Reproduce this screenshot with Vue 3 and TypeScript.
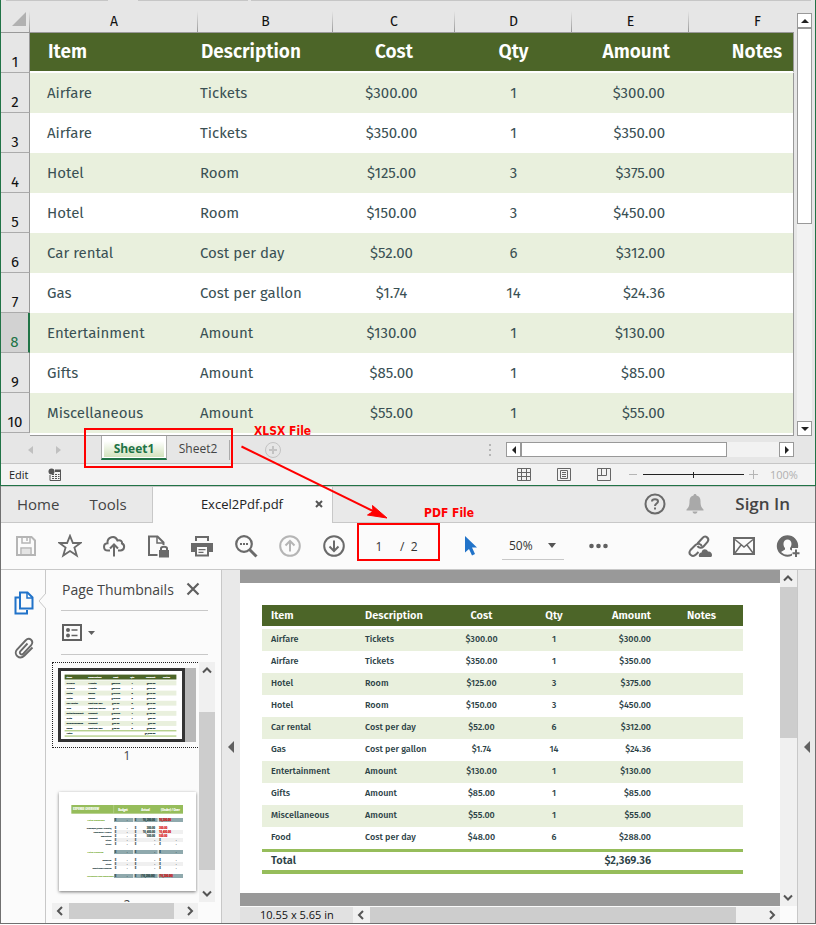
<script setup lang="ts">
import { ref } from 'vue'

interface Expense {
  item: string
  description: string
  cost: string
  qty: string
  amount: string
}

const headings = ['Item', 'Description', 'Cost', 'Qty', 'Amount', 'Notes']
const letters = ['A', 'B', 'C', 'D', 'E', 'F']

const expenses: Expense[] = [
  { item: 'Airfare', description: 'Tickets', cost: '$300.00', qty: '1', amount: '$300.00' },
  { item: 'Airfare', description: 'Tickets', cost: '$350.00', qty: '1', amount: '$350.00' },
  { item: 'Hotel', description: 'Room', cost: '$125.00', qty: '3', amount: '$375.00' },
  { item: 'Hotel', description: 'Room', cost: '$150.00', qty: '3', amount: '$450.00' },
  { item: 'Car rental', description: 'Cost per day', cost: '$52.00', qty: '6', amount: '$312.00' },
  { item: 'Gas', description: 'Cost per gallon', cost: '$1.74', qty: '14', amount: '$24.36' },
  { item: 'Entertainment', description: 'Amount', cost: '$130.00', qty: '1', amount: '$130.00' },
  { item: 'Gifts', description: 'Amount', cost: '$85.00', qty: '1', amount: '$85.00' },
  { item: 'Miscellaneous', description: 'Amount', cost: '$55.00', qty: '1', amount: '$55.00' },
  { item: 'Food', description: 'Cost per day', cost: '$48.00', qty: '6', amount: '$288.00' },
]
const sheetRows = expenses.slice(0, 9)
const total = '$2,369.36'
const activeRow = 8

interface OverviewRow {
  y: number
  label: string
  kind: 'total' | 'plain' | 'striped'
  actual: string
  over: string
  red?: boolean
}
const overview: OverviewRow[] = [
  { y: 240, label: 'Total Expenses', kind: 'total', actual: '10,200.00', over: '10,200.00', red: true },
  { y: 264, label: 'Available (Dues / Events)', kind: 'plain', actual: '300.00', over: '300.00', red: true },
  { y: 276, label: 'Insurance / Office', kind: 'striped', actual: '10,400.00', over: '10,400.00', red: true },
  { y: 288, label: 'Marketing', kind: 'plain', actual: '500.00', over: '500.00', red: true },
  { y: 300, label: 'Other', kind: 'striped', actual: '-', over: '-' },
  { y: 312, label: 'Other', kind: 'plain', actual: '-', over: '-' },
  { y: 336, label: 'Total Funding', kind: 'total', actual: '-', over: '-' },
  { y: 360, label: 'Reserves', kind: 'plain', actual: '-', over: '-' },
  { y: 372, label: 'Other', kind: 'striped', actual: '-', over: '-' },
  { y: 384, label: 'Additional Funding', kind: 'plain', actual: '-', over: '-' },
  { y: 408, label: 'Funding Less Expenses', kind: 'total', actual: '(10,200.00)', over: '(10,200.00)', red: true },
]

const sheetZoom = ref(50)
const pageNumber = ref('1')
const pdfZoom = ref('50%')
</script>

<template>
  <div class="screen">
    <section class="excel" aria-label="Spreadsheet">
      <div class="formula-edge"><i class="e1"></i><i class="e2"></i><i class="e3"></i></div>
      <div class="sheet-area">
        <div class="sheet-wrap">
          <table class="sheet">
            <colgroup>
              <col class="ch" /><col class="ca" /><col class="cb" /><col class="cc" /><col class="cd" /><col class="ce" /><col />
            </colgroup>
            <thead>
              <tr class="letters">
                <th class="corner"><svg width="15" height="15" viewBox="0 0 15 15"><path d="M14 0V14H0Z" fill="#b1b1b1" /></svg></th>
                <th v-for="l in letters" :key="l" :class="'col-' + l">{{ l }}</th>
              </tr>
            </thead>
            <tbody>
              <tr class="titles">
                <th class="rownum" scope="row">1</th>
                <td v-for="(h, i) in headings" :key="h" :class="'col-' + letters[i]"><span>{{ h }}</span></td>
              </tr>
              <tr v-for="(r, i) in sheetRows" :key="i" :class="{ band: i % 2 === 0 }">
                <th class="rownum" :class="{ active: i + 2 === activeRow }" scope="row">{{ i + 2 }}</th>
                <td class="col-A">{{ r.item }}</td>
                <td class="col-B">{{ r.description }}</td>
                <td class="col-C">{{ r.cost }}</td>
                <td class="col-D">{{ r.qty }}</td>
                <td class="col-E">{{ r.amount }}</td>
                <td class="col-F"></td>
              </tr>
            </tbody>
          </table>
          <div class="sheet-end"></div>
        </div>
        <div class="vbar">
          <button class="xbtn" aria-label="Scroll up"><svg width="8" height="8" viewBox="0 0 8 8"><path d="M0 6L4 2L8 6Z" fill="#222" /></svg></button>
          <div class="vthumb"></div>
          <button class="xbtn end" aria-label="Scroll down"><svg width="8" height="8" viewBox="0 0 8 8"><path d="M0 2L4 6L8 2Z" fill="#222" /></svg></button>
        </div>
      </div>

      <div class="sheet-tabs">
        <button class="nav-arrow" aria-label="Previous sheet"><svg width="5" height="8" viewBox="0 0 5 8"><path d="M5 0V8L0 4Z" fill="#c0c0c0" /></svg></button>
        <button class="nav-arrow" aria-label="Next sheet"><svg width="5" height="8" viewBox="0 0 5 8"><path d="M0 0V8L5 4Z" fill="#c0c0c0" /></svg></button>
        <button class="stab on"><span>Sheet1</span></button>
        <button class="stab">Sheet2</button>
        <i class="tab-sep"></i>
        <button class="add" aria-label="New sheet">
          <svg width="18" height="18" viewBox="0 0 18 18" fill="none" stroke="#c3c3c3"><circle cx="9" cy="9" r="7.500" /><path d="M9 5V13M5 9H13" stroke-width="2" /></svg>
        </button>
        <span class="grip"><i></i><i></i><i></i></span>
        <div class="hbar">
          <button class="xbtn" aria-label="Scroll left"><svg width="8" height="8" viewBox="0 0 8 8"><path d="M6 0L2 4L6 8Z" fill="#222" /></svg></button>
          <div class="hthumb"></div>
          <button class="xbtn end" aria-label="Scroll right"><svg width="8" height="8" viewBox="0 0 8 8"><path d="M2 0L6 4L2 8Z" fill="#222" /></svg></button>
        </div>
      </div>

      <div class="status">
        <span class="mode">Edit</span>
        <svg class="macro" width="14" height="14" viewBox="0 0 14 14"><path d="M2 7V12.500H12.500V3H7" fill="none" stroke="#555" /><path d="M7 1.500H13V4H7Z" fill="#555" /><circle cx="3.500" cy="3.500" r="3" fill="#555" /><path d="M4 6.500H6M7 6.500H9M10 6.500H11.500M4 8.500H6M7 8.500H9M10 8.500H11.500M4 10.500H6M7 10.500H9M10 10.500H11.500" stroke="#555" /></svg>
        <span class="views">
          <button aria-label="Normal view"><svg width="14" height="14" viewBox="0 0 14 14" fill="none" stroke="#666"><path d="M.5 .5H13.500V12.500H.5ZM.5 4.500H13.500M.5 8.500H13.500M4.500 .5V12.500M9.500 .5V12.500" /></svg></button>
          <button aria-label="Page layout"><svg width="14" height="14" viewBox="0 0 14 14" fill="none" stroke="#666"><path d="M.5 .5H13.500V12.500H.5ZM3.500 2.500H10.500V10.500H3.500ZM5 4.500H9M5 6.500H9M5 8.500H9" /></svg></button>
          <button aria-label="Page break preview"><svg width="14" height="14" viewBox="0 0 14 14" fill="none" stroke="#666"><path d="M.5 .5H13.500V12.500H.5ZM4.500 .5V7.500M9.500 .5V7.500H.5" /></svg></button>
        </span>
        <button class="zm" aria-label="Zoom out"><svg width="9" height="9" viewBox="0 0 9 9" stroke="#b5b5b5"><path d="M0 4.500H8" /></svg></button>
        <input v-model="sheetZoom" class="slider" type="range" min="0" max="100" aria-label="Zoom" />
        <button class="zm" aria-label="Zoom in"><svg width="9" height="9" viewBox="0 0 9 9" stroke="#b5b5b5"><path d="M0 4.500H9M4.500 0V9" /></svg></button>
        <span class="pct">100%</span>
      </div>
    </section>

    <section class="pdf" aria-label="PDF viewer">
      <div class="ptabs">
        <nav class="menu"><a href="#home">Home</a><a href="#tools">Tools</a></nav>
        <div class="ptab">
          <span>Excel2Pdf.pdf</span>
          <button aria-label="Close tab"><svg width="8" height="8" viewBox="0 0 8 8" stroke="#555" stroke-width="2"><path d="M1 1L7 7M7 1L1 7" /></svg></button>
        </div>
        <div class="account">
          <button aria-label="Help"><svg width="22" height="22" viewBox="0 0 22 22" fill="none" stroke="#6a6a6a" stroke-width="2"><circle cx="11" cy="11" r="9.500" /><path d="M8 8.500C8 5.500 14 5.500 14 8.500C14 10.500 11 10.500 11 13" /><path d="M11 14.500V16.500" /></svg></button>
          <button aria-label="Notifications"><svg width="18" height="20" viewBox="0 0 18 20" fill="#a9a9a9"><path d="M9 0C10 0 10.500 .6 10.500 1.500C13.500 2.300 14.500 4.500 14.500 7C14.500 12 15.500 13.500 17.500 15.500V16.500H.5V15.500C2.500 13.500 3.500 12 3.500 7C3.500 4.500 4.500 2.300 7.500 1.500C7.500 .6 8 0 9 0ZM6.500 17.500H11.500C11 20.500 7 20.500 6.500 17.500Z" /></svg></button>
          <a href="#signin">Sign In</a>
        </div>
      </div>

      <div class="toolbar">
        <div class="tools">
          <button aria-label="Save"><svg viewBox="0 0 24 24" fill="none" stroke="#b5b5b5" stroke-width="2"><path d="M3 3H17.500L21 6.500V21H3Z" /><path d="M8 3V9H16V3M13 4V7M7 21V14H17V21" stroke-width="1.500" /><path d="M8 15H16V20H8Z" fill="#e4e4e4" stroke="none" /></svg></button>
          <button aria-label="Star"><svg viewBox="0 0 24 24" fill="none" stroke="#6a6a6a" stroke-width="1.800"><path d="M12 1.800L14.900 9H22.500L16.400 13.600L18.800 21.500L12 17L5.200 21.500L7.600 13.600L1.500 9H9.100Z" /></svg></button>
          <button aria-label="Upload"><svg viewBox="0 0 24 24" fill="none" stroke="#6a6a6a" stroke-width="2"><path d="M8 16.500H6C.8 16.500 .8 9.500 5.500 9.200C5 3 13 .5 15.500 6.500C19 5.500 20.500 8 20 9.500C23.500 11 22.500 16.500 18.500 16.500H16M12 22.500V11M8 14.500L12 10.500L16 14.500" /></svg></button>
          <button aria-label="Protect"><svg viewBox="0 0 24 24" fill="none" stroke="#6a6a6a" stroke-width="2"><path d="M11.500 21H3V2.500H11.500L17.500 8.500V11" /><path d="M11 2.500V9H17.500" stroke-width="1.500" /><path d="M13 16H23V23.500H13Z" fill="#6a6a6a" stroke="none" /><path d="M15 16.500V14.500C15 12 21 12 21 14.500V16.500" /></svg></button>
          <button aria-label="Print"><svg viewBox="0 0 24 24" fill="#6a6a6a"><path d="M5 2H19V7H17V4H7V7H5Z" /><path d="M1 9H23V18H19V13H5V18H1Z" /><path d="M5 13H19V22.500H5ZM7 13V20.500H17V13ZM8.500 15H15.500V16.300H8.500ZM8.500 17.700H13.500V19H8.500Z" fill-rule="evenodd" /></svg></button>
          <button aria-label="Find"><svg viewBox="0 0 24 24" fill="none" stroke="#6a6a6a"><circle cx="10" cy="10" r="7.800" stroke-width="2.200" /><path d="M15.500 15.500L22.500 22.500" stroke-width="3" /><path d="M6 10H8M9 10H11M12 10H14" stroke-width="2" /></svg></button>
          <button aria-label="Previous page"><svg viewBox="0 0 24 24" fill="none" stroke="#b5b5b5" stroke-width="2"><circle cx="12" cy="12" r="9.800" /><path d="M12 17.500V7M7.500 11.500L12 7L16.500 11.500" /></svg></button>
          <button aria-label="Next page"><svg viewBox="0 0 24 24" fill="none" stroke="#6a6a6a" stroke-width="2"><circle cx="12" cy="12" r="9.800" /><path d="M12 6.500V17M7.500 12.500L12 17L16.500 12.500" /></svg></button>
        </div>
        <label class="pager"><input v-model="pageNumber" type="text" aria-label="Page number" /><span>/&nbsp; 2</span></label>
        <button class="pointer" aria-label="Select"><svg width="14" height="20" viewBox="0 0 14 20"><path d="M1 0L13 11.500H8L11 18L8 19.500L5 13L1 16.500Z" fill="#2173c9" /></svg></button>
        <div class="zoom">
          <select v-model="pdfZoom" aria-label="Zoom level"><option>50%</option><option>100%</option></select>
          <svg width="8" height="5" viewBox="0 0 8 5"><path d="M0 0H8L4 5Z" fill="#555" /></svg>
        </div>
        <button class="more" aria-label="More"><svg width="19" height="6" viewBox="0 0 19 6" fill="#606060"><circle cx="2.500" cy="3" r="2.300" /><circle cx="9.500" cy="3" r="2.300" /><circle cx="16.500" cy="3" r="2.300" /></svg></button>
        <div class="share">
          <button aria-label="Share link"><svg viewBox="0 0 24 24" fill="none" stroke="#6a6a6a" stroke-width="2"><path d="M9.500 9.500L14.500 4C17.500 .5 22 4.500 19.500 8L15.500 12.500C13.500 14.500 10.500 14 9.500 12" /><path d="M14 12.500C13 9.500 9.500 9 7.500 11L2.500 16C-.5 20 4.500 24 8 20.500L10.500 18" /><path d="M11.500 23C10 22 11 18.500 13.500 18.500C14 14.500 18.500 14 20 17.500C24 17 25 22 23 23Z" fill="#6a6a6a" stroke="none" /></svg></button>
          <button aria-label="Mail"><svg viewBox="0 0 24 24" fill="none" stroke="#6a6a6a"><path d="M2 4H22V20H2Z" stroke-width="2" /><path d="M3 5.500L12 13L21 5.500M3 19L9 11M21 19L15 11" stroke-width="1.500" /></svg></button>
          <button aria-label="Add person"><svg viewBox="0 0 24 24"><circle cx="11.500" cy="12" r="9.700" fill="none" stroke="#6a6a6a" stroke-width="2" /><path d="M11.500 2C18 2 21.500 7 21.500 12C21.500 16 19.500 19 17.500 20V17.500L14 15.500V14C16.500 11.500 16 5.500 11.500 5.500C7 5.500 6.500 11.500 9 14V15.500L5 18V19.500C2.500 17.500 1.500 15 1.500 12C1.500 7 5 2 11.500 2Z" fill="#6a6a6a" /><path d="M16 14H24V24H16Z" fill="#fbfbfb" /><path d="M20 15.500V23M16.500 19.200H23.500" stroke="#6a6a6a" stroke-width="2" /></svg></button>
        </div>
      </div>

      <div class="work">
        <div class="rail">
          <button aria-label="Page thumbnails"><svg width="20" height="24" viewBox="0 0 20 24" fill="none" stroke="#2173c9" stroke-width="2"><path d="M5 6.500H1.500V22.500H13V19" /><path d="M6 1.500H13.500L18.500 6.500V17.500H6Z" /><path d="M13 1.500V7H18.500" stroke-width="1.500" /></svg></button>
          <button aria-label="Attachments"><svg width="20" height="22" viewBox="0 0 20 22" fill="none" stroke="#6a6a6a" stroke-width="1.900"><path d="M13.500 6.500L6.500 14C4.500 16.500 7.500 18.500 9.500 16.500L17 8.500C20.500 4 15.500 -.5 11.500 3.500L3 12.500C-1 17.500 5.500 23.500 10.500 18.500L18.500 10.500" /></svg></button>
          <svg class="notch" width="8" height="16" viewBox="0 0 8 16"><path d="M8 0L1 8L8 16" fill="#fbfbfb" stroke="#c8c8c8" /></svg>
        </div>

        <aside class="panel">
          <header>
            <h2>Page Thumbnails</h2>
            <button aria-label="Close panel"><svg width="14" height="14" viewBox="0 0 14 14" stroke="#606060" stroke-width="2.200"><path d="M1.500 1.500L12.500 12.500M12.500 1.500L1.500 12.500" /></svg></button>
          </header>
          <div class="opts">
            <button aria-label="Options"><svg width="34" height="18" viewBox="0 0 34 18"><path d="M1 1H19V16H1Z" fill="none" stroke="#606060" stroke-width="2" /><circle cx="6" cy="6" r="2" fill="#606060" /><circle cx="6" cy="11.500" r="2" fill="#606060" /><path d="M9.500 6H15.500M9.500 11.500H15.500" stroke="#606060" stroke-width="1.500" /><path d="M26 7H33L29.500 11Z" fill="#606060" /></svg></button>
          </div>
          <div class="list">
            <div class="thumbs">
              <div class="pick">
                <div class="mini">
                  <svg viewBox="181 331 367 208" preserveAspectRatio="none" font-size="7" font-weight="700" stroke-width=".6">
                    <rect x="181" y="331" width="367" height="208" fill="#fff" />
                    <rect x="192" y="342" width="339" height="15" fill="#4c6528" />
                    <g fill="#fff" stroke="#fff">
                      <text x="198" y="352">Item</text><text x="264" y="352">Description</text>
                      <text x="347" y="352" text-anchor="middle">Cost</text><text x="397" y="352" text-anchor="middle">Qty</text>
                      <text x="467" y="352" text-anchor="end">Amount</text><text x="501" y="352" text-anchor="middle">Notes</text>
                    </g>
                    <g v-for="(r, i) in expenses" :key="i" fill="#223c3c" stroke="#223c3c">
                      <rect v-if="i % 2 === 0" x="192" :y="360 + i * 15.5" width="339" height="15" fill="#e9f0dd" stroke="none" />
                      <text x="198" :y="370 + i * 15.5">{{ r.item }}</text>
                      <text x="264" :y="370 + i * 15.5">{{ r.description }}</text>
                      <text x="347" :y="370 + i * 15.5" text-anchor="middle">{{ r.cost }}</text>
                      <text x="397" :y="370 + i * 15.5" text-anchor="middle">{{ r.qty }}</text>
                      <text x="467" :y="370 + i * 15.5" text-anchor="end">{{ r.amount }}</text>
                    </g>
                    <path d="M192 514H531M192 530H531" stroke="#96bd5b" stroke-width="3" />
                    <g fill="#223c3c" stroke="#223c3c"><text x="198" y="525">Total</text><text x="467" y="525" text-anchor="end">{{ total }}</text></g>
                  </svg>
                </div>
                <div class="mini-shade"></div>
              </div>
              <div class="num">1</div>
              <div class="second">
                <svg viewBox="176 156 411 297" preserveAspectRatio="none" font-size="8" font-weight="700" stroke-width=".4">
                  <rect x="213" y="195" width="335" height="26" fill="#96bd5b" />
                  <path d="M340 195V221" stroke="#c6dca6" stroke-width="1.500" />
                  <g fill="#fff" stroke="#fff"><text x="218" y="210">EXPENSE OVERVIEW</text><text x="354" y="213">Budget</text><text x="423" y="213">Actual</text><text x="482" y="213">(Under) / Over</text></g>
                  <g v-for="r in overview" :key="r.y" fill="#223c3c" stroke="#223c3c">
                    <g v-if="r.kind === 'total'" fill="#8fa9ad" stroke="none">
                      <rect x="341" :y="r.y - 6" width="58" height="12" /><rect x="402" :y="r.y - 6" width="70" height="12" /><rect x="475" :y="r.y - 6" width="73" height="12" />
                    </g>
                    <rect v-if="r.kind === 'striped'" x="341" :y="r.y - 6" width="207" height="12" fill="#f0f0f0" stroke="none" />
                    <text v-if="r.kind === 'total'" x="261" :y="r.y + 3" fill="#7fb142" stroke="#7fb142" font-size="7">{{ r.label }}</text>
                    <text v-else x="333" :y="r.y + 3" text-anchor="end" font-size="6">{{ r.label }}</text>
                    <text x="343" :y="r.y + 3">$</text><text x="379" :y="r.y + 3">-</text>
                    <text x="403" :y="r.y + 3">$</text><text x="464" :y="r.y + 3" text-anchor="end">{{ r.actual }}</text>
                    <text v-if="r.red" x="476" :y="r.y + 3" fill="#d40000" stroke="#d40000">{{ r.over }}</text>
                    <template v-else><text x="477" :y="r.y + 3">$</text><text x="526" :y="r.y + 3">{{ r.over }}</text></template>
                  </g>
                </svg>
              </div>
              <div class="num low">2</div>
            </div>
            <div class="pbar v">
              <button aria-label="Scroll thumbnails up"><svg width="10" height="10" viewBox="0 0 10 10"><path d="M1 7.500L5 3.500L9 7.500" /></svg></button>
              <div class="pthumb tv"></div>
              <button class="end" aria-label="Scroll thumbnails down"><svg width="10" height="10" viewBox="0 0 10 10"><path d="M1 2.500L5 6.500L9 2.500" /></svg></button>
            </div>
          </div>
          <div class="pbar h tb">
            <button aria-label="Scroll thumbnails left"><svg width="10" height="10" viewBox="0 0 10 10"><path d="M7 1L3 5L7 9" /></svg></button>
            <div class="pthumb th"></div>
            <button class="end" aria-label="Scroll thumbnails right"><svg width="10" height="10" viewBox="0 0 10 10"><path d="M3 1L7 5L3 9" /></svg></button>
          </div>
        </aside>

        <button class="strip" aria-label="Hide navigation pane"><svg width="6" height="12" viewBox="0 0 6 12"><path d="M6 0V12L0 6Z" fill="#606060" /></svg></button>

        <div class="doc">
          <div class="view">
            <div class="page">
              <table class="report">
                <colgroup><col class="pa" /><col class="pb" /><col class="pc" /><col class="pd" /><col class="pe" /><col /></colgroup>
                <thead>
                  <tr><th v-for="(h, i) in headings" :key="h" :class="'p' + letters[i]">{{ h }}</th></tr>
                </thead>
                <tbody>
                  <tr class="space"><td colspan="6"></td></tr>
                  <tr v-for="(r, i) in expenses" :key="i" :class="{ band: i % 2 === 0 }">
                    <td class="pA">{{ r.item }}</td>
                    <td class="pB">{{ r.description }}</td>
                    <td class="pC">{{ r.cost }}</td>
                    <td class="pD">{{ r.qty }}</td>
                    <td class="pE">{{ r.amount }}</td>
                    <td class="pF"></td>
                  </tr>
                </tbody>
                <tfoot>
                  <tr><td class="pA">Total</td><td></td><td></td><td></td><td class="pE">{{ total }}</td><td></td></tr>
                </tfoot>
              </table>
            </div>
            <div class="pbar v">
              <button aria-label="Scroll document up"><svg width="10" height="10" viewBox="0 0 10 10"><path d="M1 7.500L5 3.500L9 7.500" /></svg></button>
              <div class="pthumb dv"></div>
              <button class="end" aria-label="Scroll document down"><svg width="10" height="10" viewBox="0 0 10 10"><path d="M1 2.500L5 6.500L9 2.500" /></svg></button>
            </div>
          </div>
          <div class="foot">
            <span class="size">10.55 x 5.65 in</span>
            <div class="pbar h">
              <button aria-label="Scroll document left"><svg width="10" height="10" viewBox="0 0 10 10"><path d="M7 1L3 5L7 9" /></svg></button>
              <div class="pthumb dh"></div>
              <button class="end" aria-label="Scroll document right"><svg width="10" height="10" viewBox="0 0 10 10"><path d="M3 1L7 5L3 9" /></svg></button>
            </div>
          </div>
        </div>

        <button class="strip right" aria-label="Show tools pane"><svg width="6" height="12" viewBox="0 0 6 12"><path d="M6 0V12L0 6Z" fill="#606060" /></svg></button>
      </div>
    </section>

    <svg class="notes" width="816" height="925" viewBox="0 0 816 925">
      <g fill="none" stroke="#f00" stroke-width="2"><rect x="85" y="429" width="147" height="38" /><rect x="358" y="524" width="81" height="36" /><path d="M241.500 446.500L374 511.500" /></g>
      <path d="M387 518L372.500 505.500L373 511.500L367.500 515Z" fill="#f00" stroke="#f00" />
      <g fill="#f00" font-weight="700" font-size="12"><text x="254" y="435">XLSX File</text><text x="424" y="517">PDF File</text></g>
    </svg>
  </div>
</template>

<style>
body {
  background: #fff;
}
</style>

<style scoped>
* {
  box-sizing: border-box;
}
.screen {
  position: relative;
  font-family: "Open Sans", "Noto Sans", sans-serif;
  color: #444;
}
button {
  display: flex;
  align-items: center;
  justify-content: center;
  padding: 0;
  border: 0;
  background: none;
  color: inherit;
  font: inherit;
}
a {
  color: inherit;
  text-decoration: none;
}
svg {
  display: block;
  flex: none;
}
table {
  border-spacing: 0;
  table-layout: fixed;
}
td,
th {
  padding: 0;
}

/* spreadsheet */
.excel {
  border: solid #217346;
  border-width: 0 1px 1px;
  background: #e6e6e6;
}
.formula-edge {
  display: flex;
  height: 1px;
  padding: 0 4px 0 5px;
}
.formula-edge i {
  background: #c6c6c6;
}
.e1 {
  width: 102px;
  margin-right: 30px;
}
.e2 {
  width: 110px;
  margin-right: 3px;
}
.e3 {
  flex: 1;
}
.sheet-area {
  display: flex;
}
.sheet-wrap {
  flex: 1;
  min-width: 0;
}
.sheet {
  width: 100%;
  font-family: "Trebuchet MS", "Fira Sans", "Open Sans", sans-serif;
  font-size: 15px;
  color: #3a5054;
  white-space: nowrap;
}
.ch {
  width: 29px;
}
.ca {
  width: 168px;
}
.cb {
  width: 135px;
}
.cc {
  width: 122px;
}
.cd,
.ce {
  width: 117px;
}
.letters th {
  height: 32px;
  padding-top: 10px;
  border-bottom: 1px solid #999;
  background: linear-gradient(#e6e6e6, #999) right 10px / 1px 21px no-repeat;
  color: #111;
  font-weight: 400;
  font-size: 14px;
  line-height: 21px;
  text-align: center;
}
.letters .corner {
  padding: 6px 0 0 11px;
}
.letters .col-F {
  padding-left: 32px;
  background: none;
}
.rownum {
  height: 40px;
  border-right: 1px solid #999;
  border-bottom: 1px solid #ababab;
  background: #e6e6e6;
  color: #111;
  font-weight: 400;
  line-height: 20px;
  vertical-align: bottom;
}
.rownum.active {
  border-right: 2px solid #217346;
  background: #d2d2d2;
  color: #217346;
}
td.col-A {
  padding-left: 17px;
}
td.col-B {
  padding-left: 2px;
}
td.col-C {
  padding-right: 5px;
  text-align: center;
}
td.col-D {
  text-align: center;
}
td.col-E {
  padding-right: 24px;
  text-align: right;
}
td.col-F {
  padding-left: 32px;
  border-right: 1px solid #999;
  background-clip: padding-box;
  text-align: center;
}
.titles td {
  border-bottom: 2px solid #fff;
  background: #4c6528;
  color: #fff;
  font-size: 19px;
  font-weight: 600;
  line-height: 24px;
}
.titles .col-A {
  padding-left: 18px;
}
.titles .col-B {
  padding-left: 3px;
}
.titles .col-C {
  padding-right: 0;
}
.titles .col-E {
  padding-right: 19px;
}
.sheet tbody tr {
  background: #fff;
}
.sheet tbody .band {
  background: #e9f0dd;
}
.sheet-end {
  height: 3px;
  margin-left: 29px;
  border: solid #999;
  border-width: 0 1px 1px 0;
  background: #fff;
}
.vbar {
  display: flex;
  flex-direction: column;
  width: 15px;
  margin: 12px 3px 0;
  background: #f2f2f2;
}
.xbtn {
  width: 15px;
  height: 15px;
  border: 1px solid #999;
  background: #fff;
}
.vthumb {
  height: 196px;
  border: 1px solid #999;
  background: #fff;
}
.vbar .end {
  margin-top: auto;
}
.sheet-tabs {
  display: flex;
  align-items: center;
  height: 28px;
  padding: 0 21px 0 27px;
  border-bottom: 1px solid #c6c6c6;
  font-size: 12px;
}
.nav-arrow {
  width: 5px;
  margin-right: 23px;
}
.nav-arrow + .nav-arrow {
  margin-right: 40px;
}
.stab {
  align-self: flex-start;
  width: 62px;
  height: 24px;
  color: #444;
}
.stab.on {
  width: 66px;
  padding: 5px 2px 1px;
  border: 1px solid #ababab;
  border-width: 0 1px 2px;
  border-bottom-color: #217346;
  background: #fff;
  color: #217346;
  font-weight: 700;
}
.stab.on span {
  flex: 1;
  background: linear-gradient(#fff, #d3e3bd);
  line-height: 16px;
}
.tab-sep {
  width: 1px;
  height: 20px;
  background: #ababab;
}
.add {
  margin-left: 34px;
}
.grip {
  display: grid;
  gap: 3px;
  margin-left: auto;
}
.grip i {
  width: 2px;
  height: 2px;
  background: #b5b5b5;
}
.hbar {
  display: flex;
  width: 288px;
  margin-left: 15px;
  background: #f2f2f2;
}
.hthumb {
  width: 206px;
  border: 1px solid #999;
  background: #fff;
}
.hbar .end {
  margin-left: auto;
}
.status {
  display: flex;
  align-items: center;
  height: 21px;
  padding: 0 17px 0 8px;
  background: #f3f3f3;
  font-size: 11px;
}
.mode {
  width: 39px;
  color: #222;
}
.views {
  display: flex;
  gap: 26px;
  margin: 0 18px 0 auto;
}
.slider {
  width: 101px;
  height: 10px;
  margin: 0 5px;
  appearance: none;
  background: linear-gradient(#222, #222) center / 100% 1px no-repeat;
}
.slider::-webkit-slider-thumb {
  width: 1px;
  height: 6px;
  appearance: none;
  background: #222;
}
.pct {
  width: 28px;
  margin-left: 12px;
  color: #b0b0b0;
}

/* pdf viewer */
.pdf {
  border: solid #707070;
  border-width: 0 1px 1px;
  background: #fbfbfb;
}
.ptabs {
  display: flex;
  height: 37px;
  border: solid #c8c8c8;
  border-width: 1px 0;
  background: #e9e9e9;
}
.menu {
  display: flex;
  align-items: center;
  gap: 30px;
  width: 151px;
  padding: 0 0 2px 16px;
  font-size: 15px;
}
.ptab {
  display: flex;
  align-items: center;
  justify-content: flex-end;
  width: 181px;
  height: 36px;
  padding: 0 9px 2px 0;
  border: solid #c8c8c8;
  border-width: 0 1px;
  background: #fbfbfb;
  color: #222;
  font-size: 13px;
  gap: 32px;
}
.account {
  display: flex;
  align-items: center;
  gap: 20px;
  margin-left: auto;
  padding: 0 25px 2px 0;
  font-size: 17px;
  font-weight: 600;
}
.account a {
  margin-left: 11px;
}
.toolbar {
  display: flex;
  align-items: center;
  height: 47px;
  padding: 0 15px 0 13px;
  border-bottom: 1px solid #c8c8c8;
  color: #333;
  font-size: 12px;
}
.tools,
.share {
  display: flex;
  gap: 20px;
}
.tools svg,
.share svg {
  width: 24px;
  height: 24px;
}
.share {
  margin-left: auto;
}
.pager {
  display: flex;
  align-items: center;
  width: 92px;
  margin-left: 18px;
}
.pager input {
  width: 30px;
  margin-right: 6px;
  padding: 0;
  border: 0;
  background: none;
  color: inherit;
  font: inherit;
  text-align: center;
}
.pointer {
  margin-left: 8px;
}
.zoom {
  display: flex;
  align-items: center;
  align-self: flex-start;
  width: 62px;
  height: 37px;
  margin-left: 24px;
  padding: 8px 8px 0 7px;
  border-bottom: 1px solid #c8c8c8;
}
.zoom select {
  flex: 1;
  padding: 0;
  border: 0;
  appearance: none;
  background: none;
  color: inherit;
  font: inherit;
}
.more {
  margin-left: 25px;
}
.work {
  display: flex;
  height: 353px;
}
.rail {
  position: relative;
  display: flex;
  flex-direction: column;
  align-items: center;
  gap: 22px;
  width: 45px;
  padding: 21px 0 0 2px;
  border-right: 1px solid #c8c8c8;
}
.notch {
  position: absolute;
  top: 23px;
  right: -1px;
}
.panel {
  display: flex;
  flex-direction: column;
  width: 176px;
  padding: 0 6px 4px;
  border-right: 1px solid #c8c8c8;
}
.panel header,
.opts {
  display: flex;
  align-items: center;
  width: 147px;
  height: 41px;
  margin-left: 9px;
  border-bottom: 1px solid #c8c8c8;
}
.panel header {
  justify-content: space-between;
  padding: 0 8px 2px 1px;
}
.panel h2 {
  margin: 0;
  font-size: 14px;
  font-weight: 400;
  white-space: nowrap;
}
.opts {
  height: 44px;
  padding-left: 1px;
}
.list {
  display: flex;
  height: 240px;
  margin-top: 7px;
}
.thumbs {
  flex: 1;
  overflow: hidden;
}
.pick {
  display: flex;
  width: 146px;
  height: 86px;
  padding: 5px 0 5px 5px;
  border: dotted #222;
  border-width: 1px 0 1px 1px;
}
.mini {
  width: 127px;
  height: 74px;
  border: 3px solid #333;
}
.mini svg,
.second svg {
  width: 100%;
  height: 100%;
}
.mini-shade {
  width: 11px;
  background: #b8b8b8;
}
.num {
  height: 20px;
  padding-left: 3px;
  color: #444;
  font-size: 12px;
  line-height: 16px;
  text-align: center;
}
.second {
  width: 137px;
  height: 99px;
  margin: 24px 0 0 7px;
  background: #fff;
  box-shadow: 0 1px 3px #777;
}
.low {
  margin-top: 6px;
}
.pbar {
  display: flex;
  background: #f0f0f0;
}
.pbar button {
  width: 16px;
  height: 16px;
}
.pbar path {
  fill: none;
  stroke: #555;
  stroke-width: 2;
}
.pbar .end {
  margin-left: auto;
}
.pbar.v {
  flex-direction: column;
  width: 16px;
}
.v .end {
  margin: auto 0 0;
}
.pthumb {
  background: #cdcdcd;
}
.tv {
  height: 158px;
  margin-top: 34px;
}
.tb {
  width: 146px;
  margin-top: 1px;
}
.th {
  width: 105px;
  margin-left: 1px;
}
.strip {
  width: 18px;
  background: #e9e9e9;
}
.strip.right {
  border-left: 1px solid #c8c8c8;
}
.doc {
  display: flex;
  flex: 1;
  flex-direction: column;
  min-width: 0;
}
.view {
  display: flex;
  height: 336px;
}
.page {
  flex: 1;
  padding: 22px 37px 0 22px;
  border: solid #999;
  border-width: 13px 0;
  background: #fff;
}
.view .pbar {
  width: 17px;
}
.dv {
  height: 151px;
  margin-top: 1px;
}
.report {
  width: 100%;
  font-family: "Trebuchet MS", "Fira Sans", "Open Sans", sans-serif;
  color: #2c4246;
  font-size: 9px;
  font-weight: 500;
  line-height: 12px;
  white-space: nowrap;
}
.pa {
  width: 94px;
}
.pb {
  width: 89px;
}
.pc {
  width: 73px;
}
.pd {
  width: 72px;
}
.pe {
  width: 70px;
}
.report th {
  height: 21px;
  background: #4c6528;
  color: #fff;
  font-size: 11px;
  font-weight: 600;
}
.report td {
  height: 22px;
  padding-bottom: 2px;
}
.report .space td {
  height: 3px;
  padding: 0;
}
.band {
  background: #e9f0dd;
}
.report .pA {
  padding-left: 9px;
  text-align: left;
}
.report .pB {
  padding-left: 9px;
  text-align: left;
}
.report .pC,
.report .pD,
.report .pF {
  text-align: center;
}
.report .pE {
  padding-right: 9px;
  text-align: right;
}
.report tfoot td {
  height: 25px;
  padding-bottom: 0;
  border: solid #96bd5b;
  border-width: 3px 0 4px;
  font-size: 11px;
  font-weight: 600;
}
.foot {
  display: flex;
  height: 16px;
  margin-top: 1px;
}
.size {
  width: 113px;
  padding-left: 20px;
  background: #e1e1e1;
  color: #111;
  font-size: 11px;
  line-height: 16px;
}
.foot .pbar {
  flex: 1;
  margin-right: 17px;
}
.dh {
  width: 366px;
  margin-left: 1px;
}
.notes {
  position: absolute;
  top: 0;
  left: 0;
  pointer-events: none;
  font-family: "DejaVu Sans Condensed", "DejaVu Sans", sans-serif;
}
</style>
